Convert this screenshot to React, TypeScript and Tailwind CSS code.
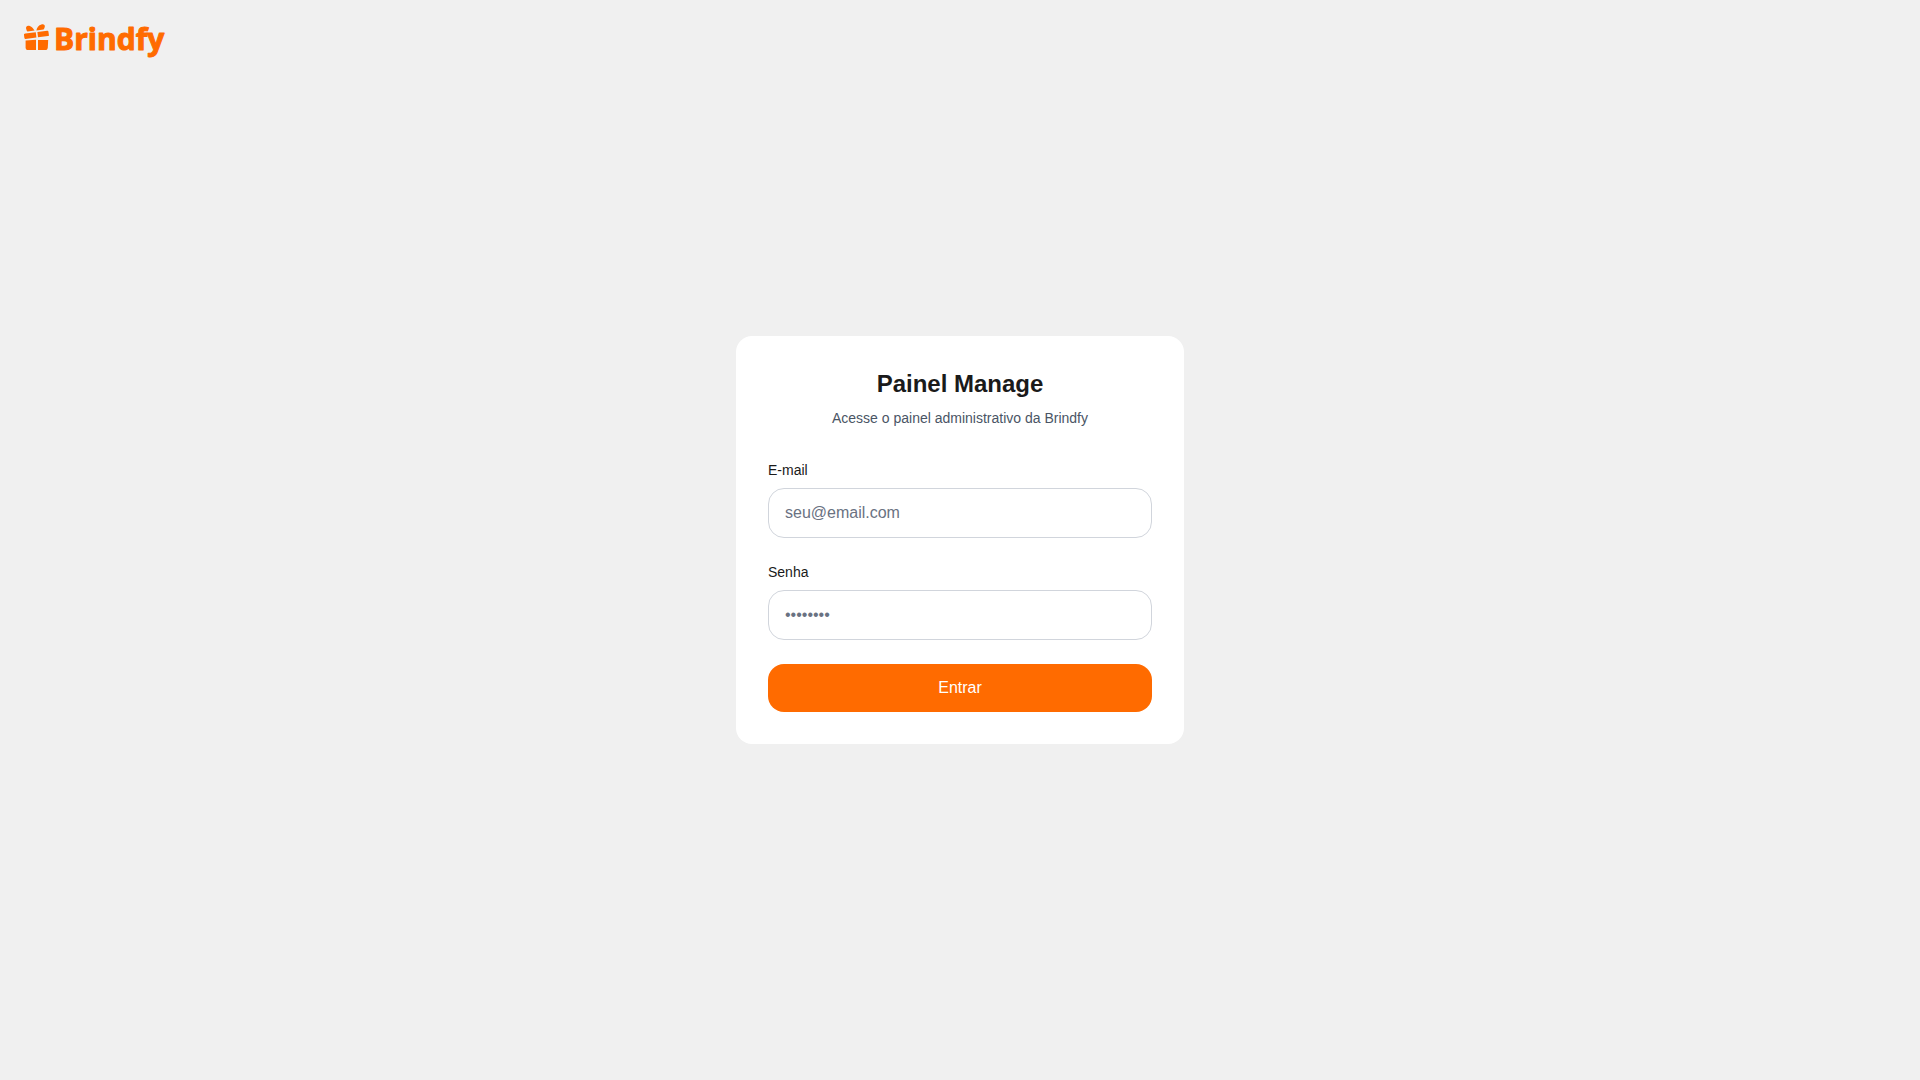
import { useState } from 'react'

function BrindfyLogo() {
  return (
    <svg width="148" height="36" viewBox="0 0 148 36" className="overflow-visible" fill="#FF6B00" role="img" aria-label="Brindfy">
      {/* Bow */}
      <path d="M2.4 5.4C1.2 3 3.4 1.2 5.8 2C7.8 2.7 9.4 4.6 10.6 6.6L3.6 7.6C2.9 7.2 2.6 6.4 2.4 5.4Z" />
      <path d="M12.4 6.4C12.8 3.4 14.6 1.2 17.4 0.4C19.6 -0.3 21.2 0.8 20.8 2.8C20.6 3.8 20.2 4.6 19.6 5.4Z" />
      {/* Lid */}
      <path d="M1.2 9.6L11.8 8.2L12.4 13.4L1.4 14.9C0.8 15 0.5 14.7 0.4 14.1L0 10.9C-0.1 10.1 0.3 9.7 1.2 9.6Z" />
      <path d="M13.4 8L23.2 6.7C24 6.6 24.3 6.9 24.4 7.6L24.9 11C25 11.7 24.7 12 24 12.1L14 13.3Z" />
      {/* Box */}
      <path d="M1.6 16.6L12 15.8V26H4.2C2.5 26 1.6 25 1.6 23.4Z" />
      <path d="M14 16H24.2L23.8 23.4C23.7 25 22.8 26 21.2 26H14Z" />
      <text
        x="30"
        y="26"
        fontFamily="'Open Sans', 'Noto Sans', sans-serif"
        fontSize="30"
        fontWeight="700"
        stroke="#FF6B00"
        strokeWidth="1"
        strokeLinejoin="round"
      >
        Brindfy
      </text>
    </svg>
  )
}

const inputClass =
  'block w-full rounded-2xl border border-gray-300 bg-white px-4 py-3 text-base text-[#1A1A1A] placeholder:text-gray-500 focus:outline-none focus:border-[#FF6B00]'

export default function App() {
  const [email, setEmail] = useState('')
  const [password, setPassword] = useState('')

  const handleSubmit = (e: React.FormEvent<HTMLFormElement>) => {
    e.preventDefault()
  }

  return (
    <div className="grid min-h-screen grid-rows-[1fr_auto_1fr] bg-[#F0F0F0] font-['Liberation_Sans',Arial,sans-serif] text-[#1A1A1A]">
      <header className="p-6">
        <a href="/" className="inline-block">
          <BrindfyLogo />
        </a>
      </header>

      <main className="w-full max-w-md justify-self-center rounded-2xl bg-white p-8">
        <div className="mb-8 text-center">
          <h1 className="text-2xl font-bold">Painel Manage</h1>
          <p className="mt-2 text-sm text-gray-600">Acesse o painel administrativo da Brindfy</p>
        </div>

        <form onSubmit={handleSubmit} className="space-y-6">
          <div>
            <label htmlFor="email" className="mb-2 block text-sm font-medium">
              E-mail
            </label>
            <input
              id="email"
              type="email"
              value={email}
              onChange={(e) => setEmail(e.target.value)}
              placeholder="seu@email.com"
              className={inputClass}
            />
          </div>

          <div>
            <label htmlFor="password" className="mb-2 block text-sm font-medium">
              Senha
            </label>
            <input
              id="password"
              type="password"
              value={password}
              onChange={(e) => setPassword(e.target.value)}
              placeholder="••••••••"
              className={inputClass}
            />
          </div>

          <button
            type="submit"
            className="w-full rounded-2xl bg-[#FF6B00] px-4 py-3 text-base font-medium text-white transition-colors hover:bg-[#E66000]"
          >
            Entrar
          </button>
        </form>
      </main>
    </div>
  )
}
